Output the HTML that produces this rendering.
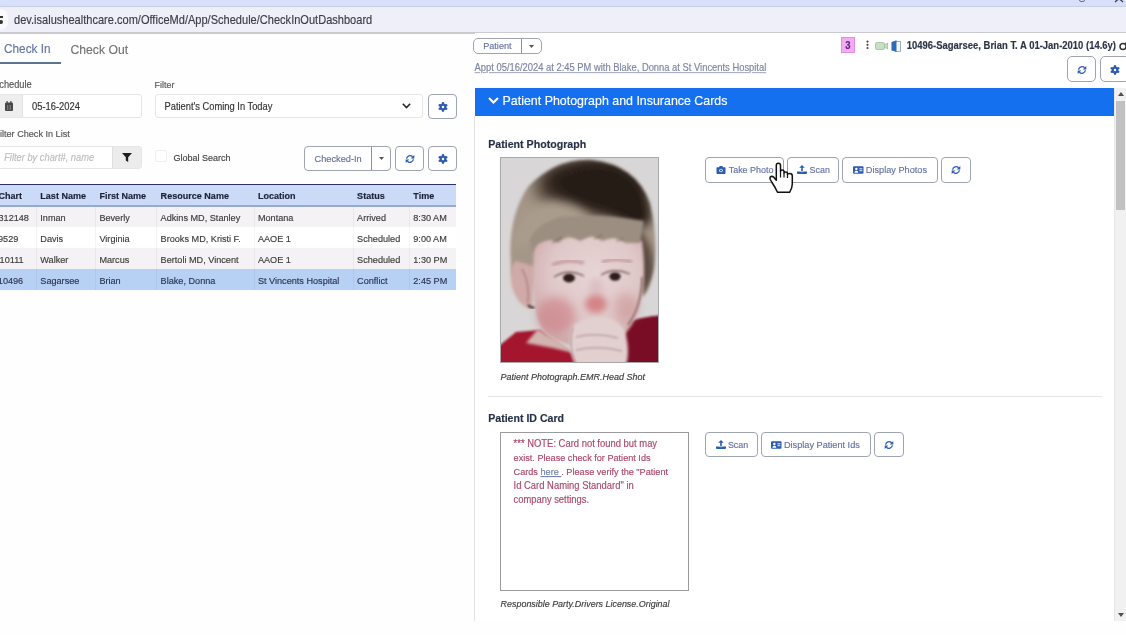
<!DOCTYPE html>
<html><head><meta charset="utf-8">
<style>
*{box-sizing:border-box;margin:0;padding:0}
html,body{width:1126px;height:635px;overflow:hidden;background:#fefefe;font-family:"Liberation Sans",sans-serif;color:#333}
.a{position:absolute}
.t{position:absolute;white-space:nowrap;line-height:1;-webkit-text-stroke:0.15px currentColor}
svg.a{overflow:visible}
#wrap{position:absolute;left:0;top:0;width:1126px;height:635px}
</style></head><body><div id="wrap">
<div class="a" style="left:0px;top:0px;width:1126px;height:6.5px;background:#d6e0fa;"></div>
<div class="a" style="left:0px;top:6px;width:1126px;height:26px;background:#eeeff8;"></div>
<div class="a" style="left:0px;top:6px;width:1126px;height:1.2000000000000002px;background:#cad0e0;"></div>
<div class="a" style="left:1079px;top:-4px;width:6px;height:6px;background:none;border:1.2px solid #6a7080;border-radius:2px"></div>
<svg class="a" style="left:1114px;top:-4px" width="10" height="6" viewBox="0 0 10 6"><path d="M1 0 L5 3.5 L9 0 M1 6 L5 2.5 L9 6" stroke="#3a3f4a" stroke-width="1.3" fill="none"/></svg>
<div class="a" style="left:0px;top:32px;width:1126px;height:1.5px;background:#cacacf;"></div>
<div class="a" style="left:0px;top:9px;width:8px;height:21px;background:#fafafe;border-radius:0 9px 9px 0"></div>
<div class="a" style="left:0px;top:15.5px;width:3px;height:2.0px;background:#333;"></div>
<div class="a" style="left:-1px;top:19.5px;width:4px;height:4.0px;background:#333;border-radius:2px"></div>
<div class="t" style="left:14.00px;top:14.97px;font-size:11.05px;color:#3c3c44;transform:scaleY(1.08);transform-origin:0 9.53px;">dev.isalushealthcare.com/OfficeMd/App/Schedule/CheckInOutDashboard</div>
<div class="t" style="left:4.00px;top:44.20px;font-size:11.80px;color:#6573a5;transform:scaleY(1.08);transform-origin:0 9.90px;">Check In</div>
<div class="t" style="left:70.50px;top:44.00px;font-size:12.20px;color:#737373;transform:scaleY(1.08);transform-origin:0 10.10px;">Check Out</div>
<div class="a" style="left:0px;top:62px;width:61px;height:2px;background:#5a7590;"></div>
<div class="t" style="left:-6.9px;top:80.97px;font-size:9.25px;color:#555;transform:scaleY(1.08);transform-origin:0 7.62px;">Schedule</div>
<div class="t" style="left:154.60px;top:80.93px;font-size:8.95px;color:#555;transform:scaleY(1.08);transform-origin:0 7.47px;">Filter</div>
<div class="a" style="left:-10px;top:94px;width:152px;height:24px;background:#fff;border:1px solid #e6e6e6;border-radius:3px;"></div>
<div class="a" style="left:-9px;top:95px;width:32px;height:22px;background:#eeeeee;border-right:1px solid #e2e2e2"></div>
<svg class="a" style="left:5px;top:101px" width="8" height="10" viewBox="0 0 8 10"><rect x="0" y="1.5" width="8" height="8.5" rx="1" fill="#484848"/><rect x="1.5" y="0" width="1.2" height="2.5" fill="#484848"/><rect x="5.3" y="0" width="1.2" height="2.5" fill="#484848"/><rect x="2.4" y="4" width="0.8" height="5" fill="#9a9a9a"/><rect x="4.8" y="4" width="0.8" height="5" fill="#9a9a9a"/></svg>
<div class="t" style="left:32.00px;top:102.10px;font-size:9.40px;color:#333;transform:scaleY(1.08);transform-origin:0 8.20px;">05-16-2024</div>
<div class="a" style="left:155px;top:94px;width:268px;height:24px;background:#fff;border:1px solid #e6e6e6;border-radius:3px;"></div>
<div class="t" style="left:164.50px;top:102.63px;font-size:9.34px;color:#333;transform:scaleY(1.08);transform-origin:0 7.67px;">Patient's Coming In Today</div>
<svg class="a" style="left:402px;top:103px" width="9" height="6" viewBox="0 0 9 6"><path d="M0.8 0.8 L4.5 4.6 L8.2 0.8" stroke="#222" stroke-width="1.5" fill="none"/></svg>
<div class="a" style="left:428px;top:94px;width:29px;height:25px;background:#fff;border:1px solid #9ea5b1;border-radius:4px;"></div>
<svg class="a" style="left:437.5px;top:101.5px" width="10" height="10" viewBox="-10 -10 20 20"><g fill="#2c5cb0"><circle r="6.6"/><circle cx="0.00" cy="-7.20" r="2.6"/><circle cx="6.24" cy="-3.60" r="2.6"/><circle cx="6.24" cy="3.60" r="2.6"/><circle cx="0.00" cy="7.20" r="2.6"/><circle cx="-6.24" cy="3.60" r="2.6"/><circle cx="-6.24" cy="-3.60" r="2.6"/></g><circle r="2.5" fill="#fff"/></svg>
<div class="t" style="left:-5.57px;top:129.54px;font-size:9.11px;color:#555;transform:scaleY(1.08);transform-origin:0 7.55px;">Filter Check In List</div>
<div class="a" style="left:-10px;top:146px;width:152px;height:23px;background:#fff;border:1px solid #e6e6e6;border-radius:3px;"></div>
<div class="t" style="left:4.20px;top:154.45px;font-size:9.30px;color:#bdbdbd;font-style:italic;transform:scaleY(1.08);transform-origin:0 7.65px;">Filter by chart#, name</div>
<div class="a" style="left:112px;top:147px;width:29px;height:21px;background:#ececec;border-left:1px solid #e0e0e0"></div>
<svg class="a" style="left:122px;top:153px" width="10" height="9" viewBox="0 0 10 9"><path d="M0 0 H10 L6.2 4.2 V9 L3.8 7.6 V4.2 Z" fill="#1e1e1e"/></svg>
<div class="a" style="left:155px;top:150px;width:12px;height:12px;background:#fff;border:1px solid #eeeeee;border-radius:2px;"></div>
<div class="t" style="left:173.50px;top:153.50px;font-size:9.00px;color:#444;transform:scaleY(1.08);transform-origin:0 7.50px;">Global Search</div>
<div class="a" style="left:304px;top:146px;width:87px;height:25px;background:#fff;border:1px solid #9ea5b1;border-radius:4px;"></div>
<div class="a" style="left:371px;top:147px;width:1px;height:23px;background:#8090c0;"></div>
<div class="t" style="left:314.50px;top:155.19px;font-size:9.23px;color:#6671a0;transform:scaleY(1.08);transform-origin:0 7.62px;">Checked-In</div>
<svg class="a" style="left:379px;top:157px" width="5" height="3" viewBox="0 0 5 3"><path d="M0 0 H5 L2.5 3 Z" fill="#555"/></svg>
<div class="a" style="left:395px;top:146px;width:29px;height:25px;background:#fff;border:1px solid #9ea5b1;border-radius:4px;"></div>
<svg class="a" style="left:404.7px;top:153.6px" width="10" height="10" viewBox="0 0 20 20"><g fill="none" stroke="#2c5cb0" stroke-width="2.7"><path d="M3.3 9.5 A6.8 6.8 0 0 1 15.2 5.6"/><path d="M16.7 10.5 A6.8 6.8 0 0 1 4.8 14.4"/></g><path d="M18.6 2 V9.2 H11.4 Z" fill="#2c5cb0"/><path d="M1.4 18 V10.8 H8.6 Z" fill="#2c5cb0"/></svg>
<div class="a" style="left:428px;top:146px;width:29px;height:25px;background:#fff;border:1px solid #9ea5b1;border-radius:4px;"></div>
<svg class="a" style="left:437.5px;top:153.6px" width="10" height="10" viewBox="-10 -10 20 20"><g fill="#2c5cb0"><circle r="6.6"/><circle cx="0.00" cy="-7.20" r="2.6"/><circle cx="6.24" cy="-3.60" r="2.6"/><circle cx="6.24" cy="3.60" r="2.6"/><circle cx="0.00" cy="7.20" r="2.6"/><circle cx="-6.24" cy="3.60" r="2.6"/><circle cx="-6.24" cy="-3.60" r="2.6"/></g><circle r="2.5" fill="#fff"/></svg>
<div class="a" style="left:0px;top:183.5px;width:456px;height:1.6999999999999886px;background:#2c3162;"></div>
<div class="a" style="left:0px;top:185px;width:456px;height:20.5px;background:#cbdaf7;"></div>
<div class="a" style="left:0px;top:205.2px;width:456px;height:1.6000000000000227px;background:#98aacb;"></div>
<div class="a" style="left:0px;top:207px;width:456px;height:20px;background:#f4f2f4;"></div>
<div class="a" style="left:0px;top:227px;width:456px;height:21px;background:#ffffff;"></div>
<div class="a" style="left:0px;top:248px;width:456px;height:21px;background:#f4f2f4;"></div>
<div class="a" style="left:0px;top:269px;width:456px;height:21px;background:#b7d1f5;"></div>
<div class="a" style="left:36px;top:207px;width:1px;height:83px;background:rgba(0,0,0,0.045);"></div>
<div class="a" style="left:95px;top:207px;width:1px;height:83px;background:rgba(0,0,0,0.045);"></div>
<div class="a" style="left:156px;top:207px;width:1px;height:83px;background:rgba(0,0,0,0.045);"></div>
<div class="a" style="left:254px;top:207px;width:1px;height:83px;background:rgba(0,0,0,0.045);"></div>
<div class="a" style="left:353px;top:207px;width:1px;height:83px;background:rgba(0,0,0,0.045);"></div>
<div class="a" style="left:409px;top:207px;width:1px;height:83px;background:rgba(0,0,0,0.045);"></div>
<div class="t" style="left:-1.50px;top:191.88px;font-size:9.05px;color:#1a2035;font-weight:bold;transform:scaleY(1.08);transform-origin:0 7.53px;">Chart</div>
<div class="t" style="left:40.30px;top:191.88px;font-size:9.05px;color:#1a2035;font-weight:bold;transform:scaleY(1.08);transform-origin:0 7.53px;">Last Name</div>
<div class="t" style="left:99.40px;top:191.88px;font-size:9.05px;color:#1a2035;font-weight:bold;transform:scaleY(1.08);transform-origin:0 7.53px;">First Name</div>
<div class="t" style="left:160.60px;top:191.88px;font-size:9.05px;color:#1a2035;font-weight:bold;transform:scaleY(1.08);transform-origin:0 7.53px;">Resource Name</div>
<div class="t" style="left:257.90px;top:191.88px;font-size:9.05px;color:#1a2035;font-weight:bold;transform:scaleY(1.08);transform-origin:0 7.53px;">Location</div>
<div class="t" style="left:357.10px;top:191.88px;font-size:9.05px;color:#1a2035;font-weight:bold;transform:scaleY(1.08);transform-origin:0 7.53px;">Status</div>
<div class="t" style="left:413.30px;top:191.88px;font-size:9.05px;color:#1a2035;font-weight:bold;transform:scaleY(1.08);transform-origin:0 7.53px;">Time</div>
<div class="t" style="left:-1.50px;top:213.53px;font-size:9.15px;color:#3b3b3b;transform:scaleY(1.08);transform-origin:0 7.58px;">312148</div>
<div class="t" style="left:40.30px;top:213.53px;font-size:9.15px;color:#3b3b3b;transform:scaleY(1.08);transform-origin:0 7.58px;">Inman</div>
<div class="t" style="left:99.40px;top:213.53px;font-size:9.15px;color:#3b3b3b;transform:scaleY(1.08);transform-origin:0 7.58px;">Beverly</div>
<div class="t" style="left:160.60px;top:213.53px;font-size:9.15px;color:#3b3b3b;transform:scaleY(1.08);transform-origin:0 7.58px;">Adkins MD, Stanley</div>
<div class="t" style="left:257.90px;top:213.53px;font-size:9.15px;color:#3b3b3b;transform:scaleY(1.08);transform-origin:0 7.58px;">Montana</div>
<div class="t" style="left:357.10px;top:213.53px;font-size:9.15px;color:#3b3b3b;transform:scaleY(1.08);transform-origin:0 7.58px;">Arrived</div>
<div class="t" style="left:413.30px;top:213.53px;font-size:9.15px;color:#3b3b3b;transform:scaleY(1.08);transform-origin:0 7.58px;">8:30 AM</div>
<div class="t" style="left:-2.00px;top:234.83px;font-size:9.15px;color:#3b3b3b;transform:scaleY(1.08);transform-origin:0 7.58px;">9529</div>
<div class="t" style="left:40.30px;top:234.83px;font-size:9.15px;color:#3b3b3b;transform:scaleY(1.08);transform-origin:0 7.58px;">Davis</div>
<div class="t" style="left:99.40px;top:234.83px;font-size:9.15px;color:#3b3b3b;transform:scaleY(1.08);transform-origin:0 7.58px;">Virginia</div>
<div class="t" style="left:160.60px;top:234.83px;font-size:9.15px;color:#3b3b3b;transform:scaleY(1.08);transform-origin:0 7.58px;">Brooks MD, Kristi F.</div>
<div class="t" style="left:257.90px;top:234.83px;font-size:9.15px;color:#3b3b3b;transform:scaleY(1.08);transform-origin:0 7.58px;">AAOE 1</div>
<div class="t" style="left:357.10px;top:234.83px;font-size:9.15px;color:#3b3b3b;transform:scaleY(1.08);transform-origin:0 7.58px;">Scheduled</div>
<div class="t" style="left:413.30px;top:234.83px;font-size:9.15px;color:#3b3b3b;transform:scaleY(1.08);transform-origin:0 7.58px;">9:00 AM</div>
<div class="t" style="left:-0.40px;top:256.03px;font-size:9.15px;color:#3b3b3b;transform:scaleY(1.08);transform-origin:0 7.58px;">10111</div>
<div class="t" style="left:40.30px;top:256.03px;font-size:9.15px;color:#3b3b3b;transform:scaleY(1.08);transform-origin:0 7.58px;">Walker</div>
<div class="t" style="left:99.40px;top:256.03px;font-size:9.15px;color:#3b3b3b;transform:scaleY(1.08);transform-origin:0 7.58px;">Marcus</div>
<div class="t" style="left:160.60px;top:256.03px;font-size:9.15px;color:#3b3b3b;transform:scaleY(1.08);transform-origin:0 7.58px;">Bertoli MD, Vincent</div>
<div class="t" style="left:257.90px;top:256.03px;font-size:9.15px;color:#3b3b3b;transform:scaleY(1.08);transform-origin:0 7.58px;">AAOE 1</div>
<div class="t" style="left:357.10px;top:256.03px;font-size:9.15px;color:#3b3b3b;transform:scaleY(1.08);transform-origin:0 7.58px;">Scheduled</div>
<div class="t" style="left:413.30px;top:256.03px;font-size:9.15px;color:#3b3b3b;transform:scaleY(1.08);transform-origin:0 7.58px;">1:30 PM</div>
<div class="t" style="left:-2.20px;top:276.93px;font-size:9.15px;color:#2c3450;transform:scaleY(1.08);transform-origin:0 7.58px;">10496</div>
<div class="t" style="left:40.30px;top:276.93px;font-size:9.15px;color:#2c3450;transform:scaleY(1.08);transform-origin:0 7.58px;">Sagarsee</div>
<div class="t" style="left:99.40px;top:276.93px;font-size:9.15px;color:#2c3450;transform:scaleY(1.08);transform-origin:0 7.58px;">Brian</div>
<div class="t" style="left:160.60px;top:276.93px;font-size:9.15px;color:#2c3450;transform:scaleY(1.08);transform-origin:0 7.58px;">Blake, Donna</div>
<div class="t" style="left:257.90px;top:276.93px;font-size:9.15px;color:#2c3450;transform:scaleY(1.08);transform-origin:0 7.58px;">St Vincents Hospital</div>
<div class="t" style="left:357.10px;top:276.93px;font-size:9.15px;color:#2c3450;transform:scaleY(1.08);transform-origin:0 7.58px;">Conflict</div>
<div class="t" style="left:413.30px;top:276.93px;font-size:9.15px;color:#2c3450;transform:scaleY(1.08);transform-origin:0 7.58px;">2:45 PM</div>
<div class="a" style="left:475px;top:33px;width:651px;height:588px;background:#ffffff;"></div>
<div class="a" style="left:474px;top:116px;width:1px;height:505px;background:#e3e3e3;"></div>
<div class="a" style="left:473px;top:38px;width:69px;height:16px;background:#fff;border:1px solid #9ea5b1;border-radius:5px;"></div>
<div class="a" style="left:521px;top:39px;width:1px;height:14px;background:#8090c0;"></div>
<div class="t" style="left:483.20px;top:42.24px;font-size:9.12px;color:#6671a0;transform:scaleY(1.08);transform-origin:0 7.56px;">Patient</div>
<svg class="a" style="left:529px;top:45px" width="5" height="3" viewBox="0 0 5 3"><path d="M0 0 H5 L2.5 3 Z" fill="#555"/></svg>
<div class="t" style="left:474.60px;top:62.90px;font-size:9.40px;color:#7d84a2;transform:scaleY(1.08);transform-origin:0 8.20px;text-decoration:underline;text-decoration-color:#a6acc4;">Appt 05/16/2024 at 2:45 PM with Blake, Donna at St Vincents Hospital</div>
<div class="a" style="left:842px;top:37.5px;width:12px;height:14.5px;background:#f5aaf5;outline:0.5px solid #e090e0;"></div>
<div class="t" style="left:845.20px;top:40.75px;font-size:9.50px;color:#5a2a7a;font-weight:bold;transform:scaleY(1.08);transform-origin:0 8.25px;">3</div>
<svg class="a" style="left:866px;top:40px" width="3" height="10" viewBox="0 0 3 10"><circle cx="1.5" cy="1.6" r="1.1" fill="#444"/><circle cx="1.5" cy="4.8" r="1.1" fill="#444"/><circle cx="1.5" cy="8" r="1.1" fill="#444"/></svg>
<svg class="a" style="left:875px;top:42px" width="13" height="8" viewBox="0 0 13 8"><rect x="0.5" y="0.5" width="9" height="7" rx="1.5" fill="#c6e0c6" stroke="#9abf9a" stroke-width="0.8"/><path d="M9.5 3 L12.5 1 V7 L9.5 5 Z" fill="#c6e0c6" stroke="#9abf9a" stroke-width="0.8"/></svg>
<svg class="a" style="left:891px;top:40px" width="10" height="12" viewBox="0 0 10 12"><rect x="4.5" y="1.5" width="5" height="10" fill="#f4f8fc" stroke="#8a98a8" stroke-width="0.8"/><path d="M0.5 2 L5.5 0.3 V11.8 L0.5 10.5 Z" fill="#2c6fb6"/></svg>
<div class="t" style="left:906.70px;top:40.76px;font-size:9.48px;color:#2b3445;font-weight:bold;transform:scaleY(1.08);transform-origin:0 8.24px;">10496-Sagarsee, Brian T. A 01-Jan-2010 (14.6y)</div>
<svg class="a" style="left:1119px;top:41px" width="10" height="10" viewBox="0 0 10 10"><circle cx="4" cy="5.5" r="3" stroke="#333" stroke-width="1.5" fill="none"/><path d="M6 3 L9 0" stroke="#333" stroke-width="1.4"/></svg>
<div class="a" style="left:1067px;top:56px;width:29px;height:26px;background:#fff;border:1px solid #9ea5b1;border-radius:5px;"></div>
<svg class="a" style="left:1076.5px;top:64.5px" width="10" height="10" viewBox="0 0 20 20"><g fill="none" stroke="#2c5cb0" stroke-width="2.7"><path d="M3.3 9.5 A6.8 6.8 0 0 1 15.2 5.6"/><path d="M16.7 10.5 A6.8 6.8 0 0 1 4.8 14.4"/></g><path d="M18.6 2 V9.2 H11.4 Z" fill="#2c5cb0"/><path d="M1.4 18 V10.8 H8.6 Z" fill="#2c5cb0"/></svg>
<div class="a" style="left:1100px;top:56px;width:30px;height:26px;background:#fff;border:1px solid #9ea5b1;border-radius:5px;"></div>
<svg class="a" style="left:1109.5px;top:64.5px" width="10" height="10" viewBox="-10 -10 20 20"><g fill="#2c5cb0"><circle r="6.6"/><circle cx="0.00" cy="-7.20" r="2.6"/><circle cx="6.24" cy="-3.60" r="2.6"/><circle cx="6.24" cy="3.60" r="2.6"/><circle cx="0.00" cy="7.20" r="2.6"/><circle cx="-6.24" cy="3.60" r="2.6"/><circle cx="-6.24" cy="-3.60" r="2.6"/></g><circle r="2.5" fill="#fff"/></svg>
<div class="a" style="left:475px;top:88px;width:639px;height:28px;background:#1570f0;"></div>
<svg class="a" style="left:488px;top:97px" width="11" height="7" viewBox="0 0 11 7"><path d="M1 1 L5.5 5.5 L10 1" stroke="#fff" stroke-width="2" fill="none"/></svg>
<div class="t" style="left:502.60px;top:95.20px;font-size:12.41px;color:#ffffff;transform:scaleY(1.08);transform-origin:0 10.21px;">Patient Photograph and Insurance Cards</div>
<div class="t" style="left:488.20px;top:138.58px;font-size:10.64px;color:#263045;font-weight:bold;transform:scaleY(1.08);transform-origin:0 9.32px;">Patient Photograph</div>
<svg class="a" style="left:500px;top:157px" width="159" height="206" viewBox="0 0 159 206">
<defs>
<filter id="b1" x="-50%" y="-50%" width="200%" height="200%"><feGaussianBlur stdDeviation="0.8"/></filter>
<filter id="b2" x="-20%" y="-20%" width="140%" height="140%"><feGaussianBlur stdDeviation="1.4"/></filter>
<filter id="b3" x="-30%" y="-30%" width="160%" height="160%"><feGaussianBlur stdDeviation="3"/></filter>
<filter id="b5" x="-40%" y="-40%" width="180%" height="180%"><feGaussianBlur stdDeviation="5"/></filter>
<filter id="b8" x="-50%" y="-50%" width="200%" height="200%"><feGaussianBlur stdDeviation="8"/></filter>
<radialGradient id="face" cx="55%" cy="35%" r="70%"><stop offset="0" stop-color="#e6d4d5"/><stop offset="0.55" stop-color="#e0c8c9"/><stop offset="1" stop-color="#cca6a6"/></radialGradient>
<clipPath id="pc"><rect x="0" y="0" width="159" height="206"/></clipPath>
</defs>
<g clip-path="url(#pc)">
<rect x="0" y="0" width="159" height="206" fill="#d8d6d6"/>
<!-- shirt -->
<g filter="url(#b1)">
<path d="M-5 192 L16 175 L40 173 Q60 190 76 197 L112 200 L124 166 Q140 160 165 158 V210 H-5 Z" fill="#a4172e"/>
<path d="M110 200 L124 166 Q140 160 165 158 V210 H105 Z" fill="#7a0e28"/>
</g>
<!-- neck -->
<path d="M38 172 Q46 178 56 182 L74 196 Q50 190 26 186 Z" fill="#d2b4b0" filter="url(#b2)"/>
<!-- hair -->
<clipPath id="hc"><path d="M12 118 Q5 64 28 30 Q56 1 92 3 Q136 8 150 46 Q158 80 154 112 Q150 132 143 140 L136 128 L134 100 L36 104 L34 128 Z"/></clipPath>
<g filter="url(#b2)">
<path d="M12 118 Q5 64 28 30 Q56 1 92 3 Q136 8 150 46 Q158 80 154 112 Q150 132 143 140 L136 128 L134 100 L36 104 L34 128 Z" fill="#a59788"/>
<g clip-path="url(#hc)">
<ellipse cx="92" cy="28" rx="56" ry="30" fill="#3a2e27" filter="url(#b8)"/>
<path d="M50 20 Q82 2 114 8 Q148 20 152 60 Q148 74 132 70 Q108 56 82 48 Q58 42 50 20 Z" fill="#261c17" filter="url(#b5)"/>
<path d="M136 70 Q156 86 154 120 L143 140 L134 120 Z" fill="#5a4a40" filter="url(#b3)"/>
<path d="M10 90 Q22 50 50 44 Q78 44 92 62 L50 84 Z" fill="#aa9c8c" filter="url(#b5)"/>
</g>
</g>
<!-- ear -->
<path d="M16 104 Q8 110 12 130 Q18 150 32 152 L36 110 Z" fill="#cfaaa8" filter="url(#b2)"/>
<path d="M22 112 Q30 126 28 146" stroke="#b58c8a" stroke-width="2" fill="none" filter="url(#b1)"/>
<path d="M28 148 Q32 152 35 150" stroke="#3a2a28" stroke-width="2" fill="none" filter="url(#b1)"/>
<!-- face -->
<path d="M34 86 Q80 74 142 84 Q147 120 140 150 Q132 172 120 182 L70 188 Q50 182 42 172 Q34 156 33 130 Z" fill="url(#face)" filter="url(#b2)"/>
<!-- jaw right outline -->
<path d="M142 120 Q142 148 128 168" stroke="#7e5e58" stroke-width="1.6" fill="none" filter="url(#b1)"/>
<!-- fringe irregular -->
<path d="M32 98 Q36 84 50 82 L58 86 L68 78 L80 84 L92 78 L102 84 L114 80 L126 86 L140 86 L144 64 Q100 56 60 60 Q38 66 30 82 Z" fill="#9c8e80" filter="url(#b2)"/>
<path d="M52 86 L62 80 M94 82 L102 78 M116 84 L124 82" stroke="#6a5a50" stroke-width="1.2" opacity="0.6" filter="url(#b1)"/>
<!-- cheeks -->
<ellipse cx="56" cy="158" rx="19" ry="18" fill="#cc7c82" opacity="0.6" filter="url(#b5)"/>
<ellipse cx="126" cy="150" rx="12" ry="14" fill="#c88888" opacity="0.45" filter="url(#b5)"/>
<!-- eye shadows / brows -->
<path d="M52 108 Q68 101 84 106" stroke="#c0999a" stroke-width="3" fill="none" filter="url(#b2)"/>
<path d="M102 105 Q116 100 132 105" stroke="#c0999a" stroke-width="3" fill="none" filter="url(#b2)"/>
<!-- eyes -->
<path d="M56 122 Q68 114 82 121 Q70 128 56 122 Z" fill="#e0d0d0" filter="url(#b1)"/>
<ellipse cx="69" cy="121" rx="6" ry="4.4" fill="#2e1c1a" filter="url(#b1)"/>
<path d="M54 120 Q68 111 84 119" stroke="#7a5a58" stroke-width="1.3" fill="none" filter="url(#b1)"/>
<path d="M103 120 Q115 113 128 119 Q117 126 103 120 Z" fill="#e0d0d0" filter="url(#b1)"/>
<ellipse cx="115" cy="119.5" rx="5.6" ry="4.2" fill="#2e1c1a" filter="url(#b1)"/>
<path d="M101 118 Q114 110 130 117" stroke="#7a5a58" stroke-width="1.3" fill="none" filter="url(#b1)"/>
<!-- nose -->
<ellipse cx="96" cy="132" rx="7" ry="11" fill="#dcc0c2" filter="url(#b3)"/>
<ellipse cx="96" cy="147" rx="11" ry="9" fill="#d48486" filter="url(#b3)"/>
<!-- hand -->
<path d="M72 170 Q84 158 104 160 Q122 163 126 178 Q130 196 126 208 H76 Q66 190 72 170 Z" fill="#e2d0d0" filter="url(#b2)"/>
<path d="M76 180 Q96 175 118 181 M76 193 Q98 188 122 194" stroke="#bca0a0" stroke-width="1.3" fill="none" filter="url(#b1)"/>
<path d="M73 170 Q68 186 75 206" stroke="#b89a9a" stroke-width="1.4" fill="none" filter="url(#b1)"/>
</g>
<rect x="0.5" y="0.5" width="158" height="205" fill="none" stroke="#a8a8a8"/>
</svg>
<div class="t" style="left:500.60px;top:372.61px;font-size:8.99px;color:#3a3a3a;font-style:italic;transform:scaleY(1.08);transform-origin:0 7.50px;">Patient Photograph.EMR.Head Shot</div>
<div class="a" style="left:705px;top:157px;width:79px;height:26px;background:#fff;border:1px solid #9ea5b1;border-radius:4px;"></div>
<svg class="a" style="left:715.5px;top:166px" width="10" height="8" viewBox="0 0 20 16"><path d="M1 4 Q1 2.5 2.5 2.5 H6 L7.5 0 H12.5 L14 2.5 H17.5 Q19 2.5 19 4 V14.5 Q19 16 17.5 16 H2.5 Q1 16 1 14.5 Z" fill="#2c5cb0"/><circle cx="10" cy="9" r="3.6" fill="#fff"/><circle cx="10" cy="9" r="2.2" fill="#2c5cb0"/></svg>
<div class="t" style="left:728.70px;top:166.43px;font-size:8.95px;color:#6671a0;transform:scaleY(1.08);transform-origin:0 7.47px;">Take Photo</div>
<div class="a" style="left:787px;top:157px;width:52px;height:26px;background:#fff;border:1px solid #9ea5b1;border-radius:4px;"></div>
<svg class="a" style="left:797px;top:165px" width="10" height="9" viewBox="0 0 20 18"><path d="M10 0 L15.5 5.5 H11.6 V13 H8.4 V5.5 H4.5 Z" fill="#2c5cb0"/><path d="M0 13 H6.5 Q10 15.5 13.5 13 H20 V16 Q20 18 18 18 H2 Q0 18 0 16 Z" fill="#2c5cb0"/></svg>
<div class="t" style="left:809.60px;top:166.45px;font-size:8.90px;color:#6671a0;transform:scaleY(1.08);transform-origin:0 7.45px;">Scan</div>
<div class="a" style="left:842px;top:157px;width:96px;height:26px;background:#fff;border:1px solid #9ea5b1;border-radius:4px;"></div>
<svg class="a" style="left:852.5px;top:166px" width="10.5" height="8" viewBox="0 0 22 16"><rect x="0" y="0" width="22" height="16" rx="2" fill="#2c5cb0"/><circle cx="7" cy="6" r="2.6" fill="#fff"/><path d="M2.8 13.5 Q3 9.5 7 9.5 Q11 9.5 11.2 13.5 Z" fill="#fff"/><rect x="13.5" y="4.5" width="6" height="2" fill="#fff"/><rect x="13.5" y="8.5" width="6" height="2" fill="#fff"/></svg>
<div class="t" style="left:865.80px;top:166.31px;font-size:9.19px;color:#6671a0;transform:scaleY(1.08);transform-origin:0 7.59px;">Display Photos</div>
<div class="a" style="left:941px;top:157px;width:30px;height:26px;background:#fff;border:1px solid #9ea5b1;border-radius:4px;"></div>
<svg class="a" style="left:951.0px;top:165.0px" width="10" height="10" viewBox="0 0 20 20"><g fill="none" stroke="#2c5cb0" stroke-width="2.7"><path d="M3.3 9.5 A6.8 6.8 0 0 1 15.2 5.6"/><path d="M16.7 10.5 A6.8 6.8 0 0 1 4.8 14.4"/></g><path d="M18.6 2 V9.2 H11.4 Z" fill="#2c5cb0"/><path d="M1.4 18 V10.8 H8.6 Z" fill="#2c5cb0"/></svg>
<div class="a" style="left:488px;top:396px;width:614px;height:1px;background:#e6e6e6;"></div>
<div class="t" style="left:488.20px;top:413.00px;font-size:10.59px;color:#263045;font-weight:bold;transform:scaleY(1.08);transform-origin:0 9.29px;">Patient ID Card</div>
<div class="a" style="left:500px;top:432px;width:189px;height:159px;background:#fff;border:1px solid #9b9b9b;border-radius:0px;"></div>
<div class="t" style="left:513.60px;top:439.29px;font-size:9.43px;color:#ab4868;transform:scaleY(1.08);transform-origin:0 8.21px;">*** NOTE: Card not found but may</div>
<div class="t" style="left:513.60px;top:453.93px;font-size:9.14px;color:#ab4868;transform:scaleY(1.08);transform-origin:0 7.57px;">exist. Please check for Patient Ids</div>
<div class="t" style="left:513.60px;top:467.82px;font-size:9.15px;color:#ab4868;transform:scaleY(1.08);transform-origin:0 7.58px;">Cards <span style="color:#6f7fa8;text-decoration:underline">here </span>. Please verify the "Patient</div>
<div class="t" style="left:513.60px;top:481.19px;font-size:9.43px;color:#ab4868;transform:scaleY(1.08);transform-origin:0 8.21px;">Id Card Naming Standard" in</div>
<div class="t" style="left:513.60px;top:495.71px;font-size:9.37px;color:#ab4868;transform:scaleY(1.08);transform-origin:0 7.68px;">company settings.</div>
<div class="t" style="left:500.60px;top:600.03px;font-size:8.94px;color:#3a3a3a;font-style:italic;transform:scaleY(1.08);transform-origin:0 7.47px;">Responsible Party.Drivers License.Original</div>
<div class="a" style="left:705px;top:432px;width:53px;height:25px;background:#fff;border:1px solid #9ea5b1;border-radius:4px;"></div>
<svg class="a" style="left:715.5px;top:440px" width="10" height="9" viewBox="0 0 20 18"><path d="M10 0 L15.5 5.5 H11.6 V13 H8.4 V5.5 H4.5 Z" fill="#2c5cb0"/><path d="M0 13 H6.5 Q10 15.5 13.5 13 H20 V16 Q20 18 18 18 H2 Q0 18 0 16 Z" fill="#2c5cb0"/></svg>
<div class="t" style="left:727.90px;top:441.35px;font-size:8.90px;color:#6671a0;transform:scaleY(1.08);transform-origin:0 7.45px;">Scan</div>
<div class="a" style="left:761px;top:432px;width:110px;height:25px;background:#fff;border:1px solid #9ea5b1;border-radius:4px;"></div>
<svg class="a" style="left:771px;top:441px" width="10.5" height="8" viewBox="0 0 22 16"><rect x="0" y="0" width="22" height="16" rx="2" fill="#2c5cb0"/><circle cx="7" cy="6" r="2.6" fill="#fff"/><path d="M2.8 13.5 Q3 9.5 7 9.5 Q11 9.5 11.2 13.5 Z" fill="#fff"/><rect x="13.5" y="4.5" width="6" height="2" fill="#fff"/><rect x="13.5" y="8.5" width="6" height="2" fill="#fff"/></svg>
<div class="t" style="left:783.90px;top:441.20px;font-size:9.19px;color:#6671a0;transform:scaleY(1.08);transform-origin:0 7.59px;">Display Patient Ids</div>
<div class="a" style="left:874px;top:432px;width:30px;height:25px;background:#fff;border:1px solid #9ea5b1;border-radius:4px;"></div>
<svg class="a" style="left:884.0px;top:440.0px" width="10" height="10" viewBox="0 0 20 20"><g fill="none" stroke="#2c5cb0" stroke-width="2.7"><path d="M3.3 9.5 A6.8 6.8 0 0 1 15.2 5.6"/><path d="M16.7 10.5 A6.8 6.8 0 0 1 4.8 14.4"/></g><path d="M18.6 2 V9.2 H11.4 Z" fill="#2c5cb0"/><path d="M1.4 18 V10.8 H8.6 Z" fill="#2c5cb0"/></svg>
<div class="a" style="left:1114px;top:88px;width:12px;height:533px;background:#f1f1f1;border-left:1px solid #e6e6e6"></div>
<div class="a" style="left:1116px;top:101px;width:9px;height:109px;background:#c1c1c1;"></div>
<svg class="a" style="left:1118px;top:92px" width="6" height="4" viewBox="0 0 6 4"><path d="M0 4 H6 L3 0 Z" fill="#505050"/></svg>
<svg class="a" style="left:1118px;top:613px" width="6" height="4" viewBox="0 0 6 4"><path d="M0 0 H6 L3 4 Z" fill="#505050"/></svg>
<svg class="a" style="left:768px;top:162px" width="28" height="33" viewBox="0 0 28 33"><path d="M8.3 18 L8.3 3.5 Q8.3 1.3 10.4 1.3 Q12.5 1.3 12.5 3.5 L12.5 9.5 Q12.5 8 14.25 8 Q16 8 16 9.5 L16 11 Q16 10 17.75 10 Q19.5 10 19.5 11.5 L19.5 12.5 Q19.5 11.5 21.8 11.5 Q24.3 11.5 24.3 14 L24.3 22 Q24.3 26 21.6 30.3 L9.5 30.3 Q7 25 4 20.5 L2.3 17.5 Q1.3 15.2 3 14.5 Q4.6 14 6 15.6 L8.3 18.2 Z" fill="#fff" stroke="#111" stroke-width="1.5" stroke-linejoin="round"/><path d="M12.5 9.5 V15.5 M16 11 V15.5 M19.5 12.5 V16" stroke="#111" stroke-width="1.2"/></svg>
</div></body></html>
